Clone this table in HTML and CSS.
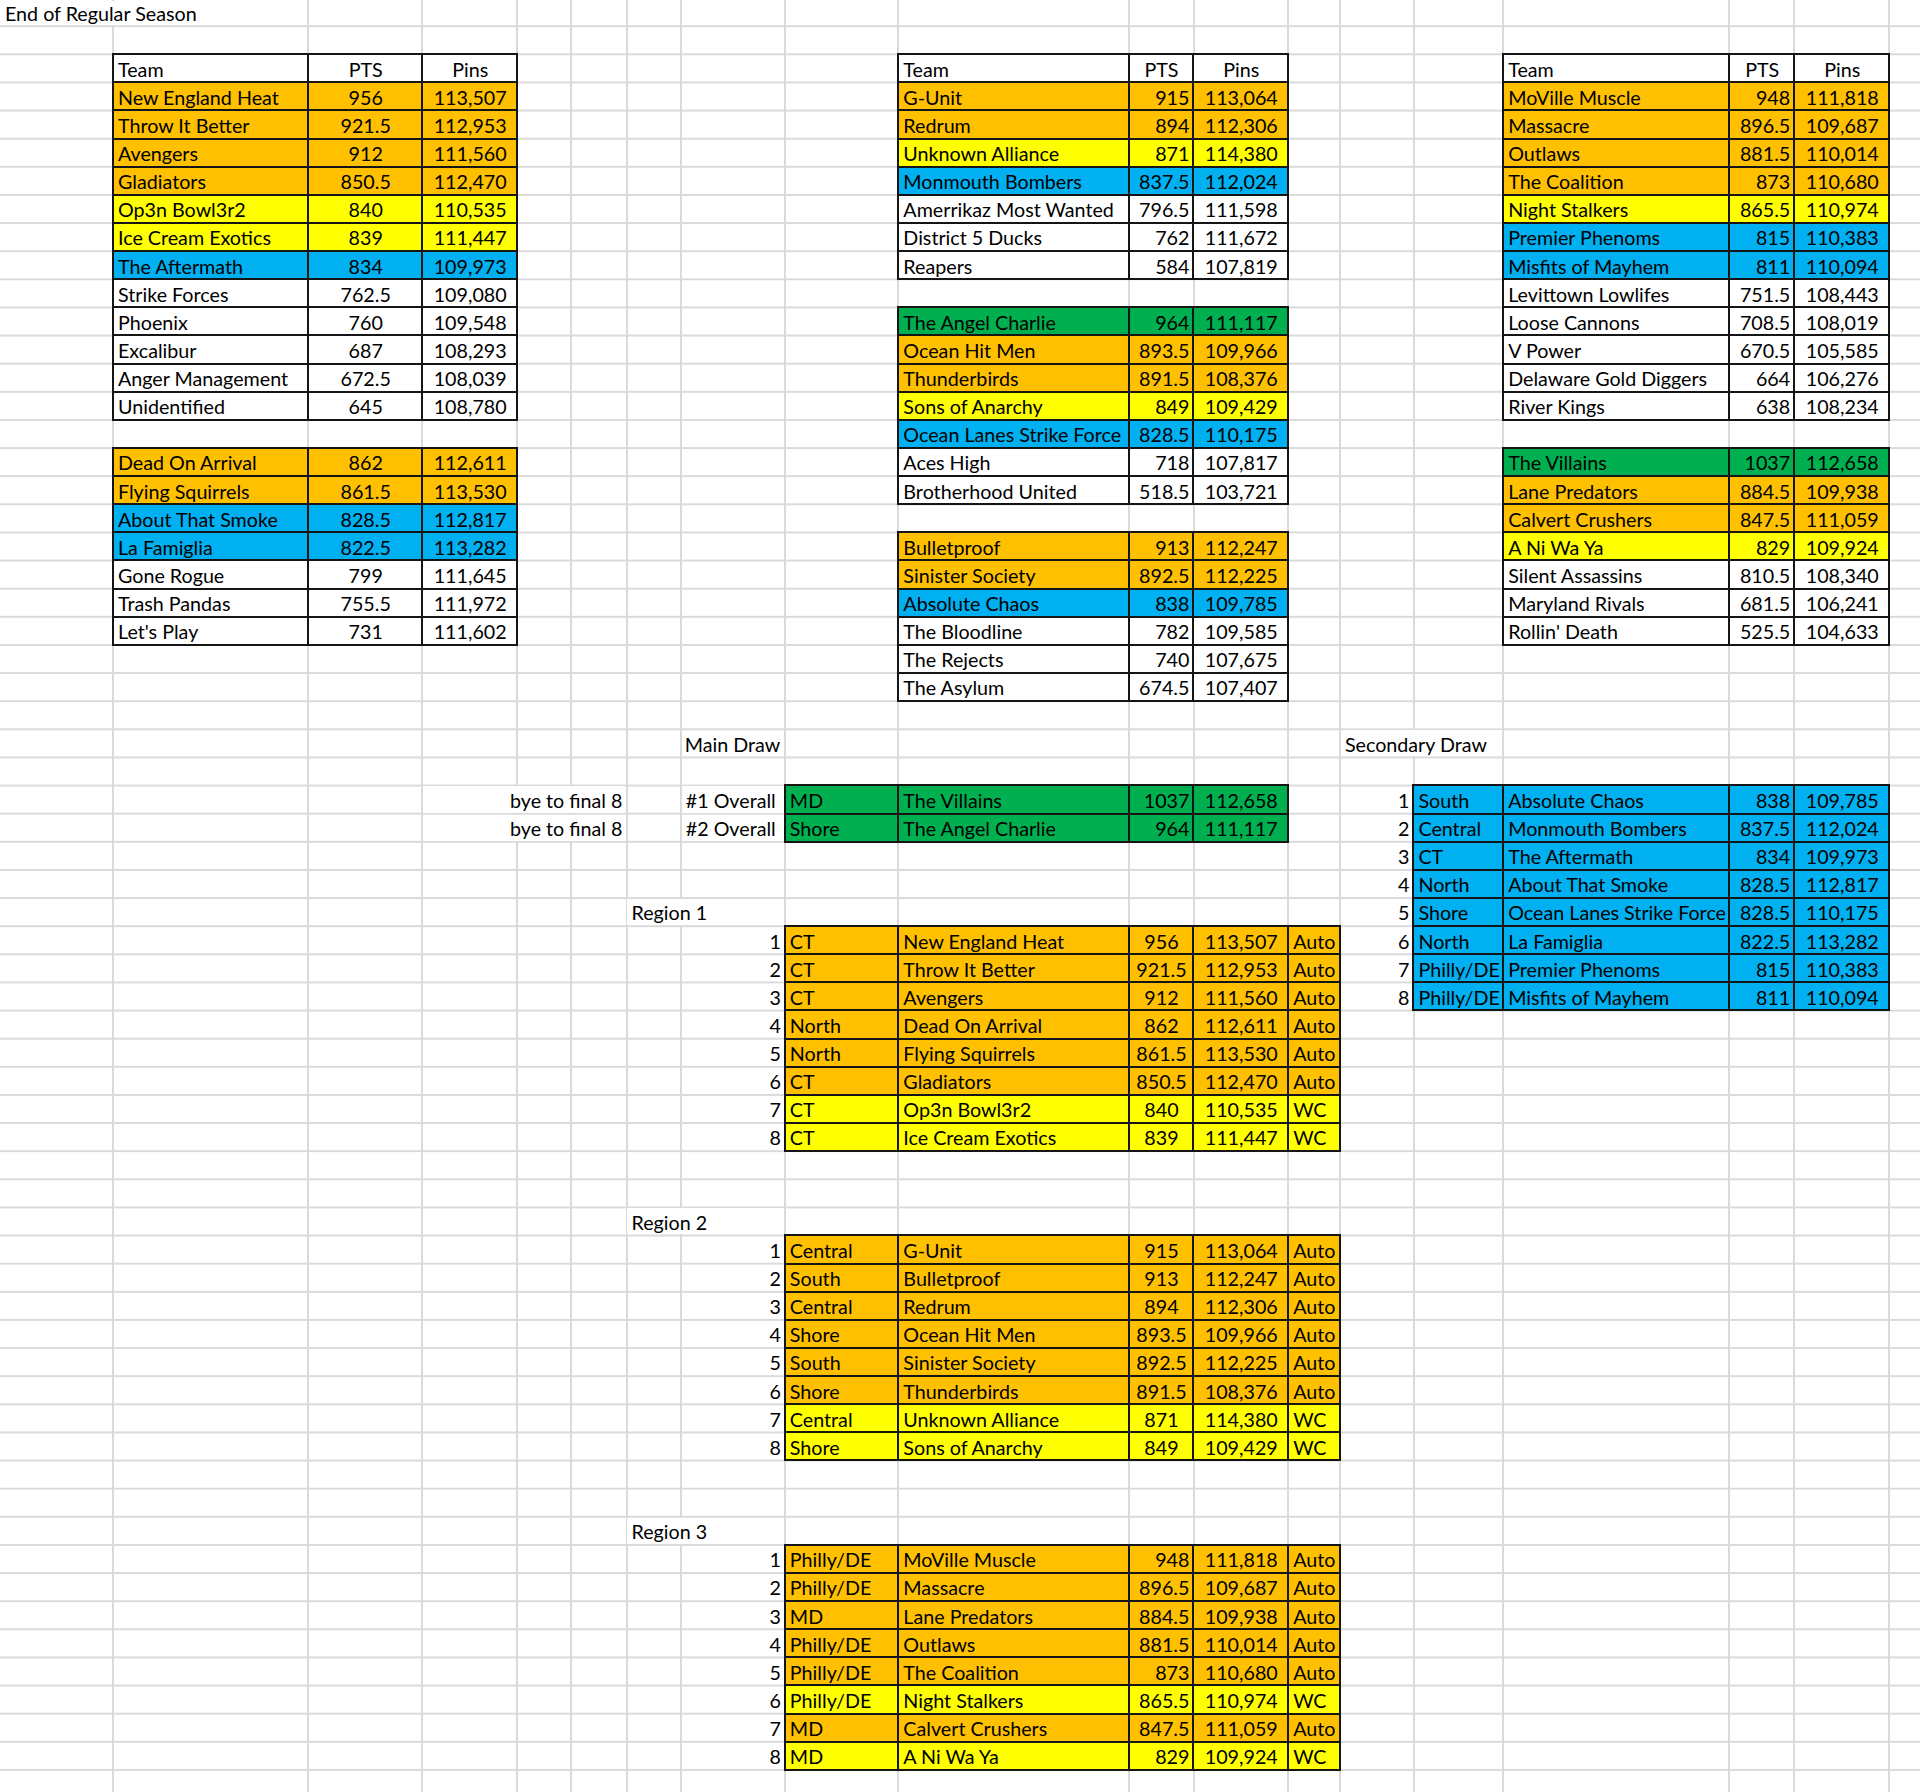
FILE: index.html
```html
<!DOCTYPE html>
<html lang="en">
<head>
<meta charset="utf-8">
<title>End of Regular Season</title>
<link rel="stylesheet" href="styles.css">
</head>
<body>
<div class="sheet">
  <div class="lbl over title">End of Regular Season</div>

  <!-- Left standings -->
  <div class="tbl t3 tl a-cc pos-l1">
    <div class="r h"><span>Team</span><span>PTS</span><span>Pins</span></div>
    <div class="r o"><span>New England Heat</span><span>956</span><span>113,507</span></div>
    <div class="r o"><span>Throw It Better</span><span>921.5</span><span>112,953</span></div>
    <div class="r o"><span>Avengers</span><span>912</span><span>111,560</span></div>
    <div class="r o"><span>Gladiators</span><span>850.5</span><span>112,470</span></div>
    <div class="r y"><span>Op3n Bowl3r2</span><span>840</span><span>110,535</span></div>
    <div class="r y"><span>Ice Cream Exotics</span><span>839</span><span>111,447</span></div>
    <div class="r b"><span>The Aftermath</span><span>834</span><span>109,973</span></div>
    <div class="r"><span>Strike Forces</span><span>762.5</span><span>109,080</span></div>
    <div class="r"><span>Phoenix</span><span>760</span><span>109,548</span></div>
    <div class="r"><span>Excalibur</span><span>687</span><span>108,293</span></div>
    <div class="r"><span>Anger Management</span><span>672.5</span><span>108,039</span></div>
    <div class="r"><span>Unidentified</span><span>645</span><span>108,780</span></div>
  </div>
  <div class="tbl t3 tl a-cc pos-l2">
    <div class="r o"><span>Dead On Arrival</span><span>862</span><span>112,611</span></div>
    <div class="r o"><span>Flying Squirrels</span><span>861.5</span><span>113,530</span></div>
    <div class="r b"><span>About That Smoke</span><span>828.5</span><span>112,817</span></div>
    <div class="r b"><span>La Famiglia</span><span>822.5</span><span>113,282</span></div>
    <div class="r"><span>Gone Rogue</span><span>799</span><span>111,645</span></div>
    <div class="r"><span>Trash Pandas</span><span>755.5</span><span>111,972</span></div>
    <div class="r"><span>Let's Play</span><span>731</span><span>111,602</span></div>
  </div>

  <!-- Middle standings -->
  <div class="tbl t3 tm a-rc pos-m1">
    <div class="r h"><span>Team</span><span>PTS</span><span>Pins</span></div>
    <div class="r o"><span>G-Unit</span><span>915</span><span>113,064</span></div>
    <div class="r o"><span>Redrum</span><span>894</span><span>112,306</span></div>
    <div class="r y"><span>Unknown Alliance</span><span>871</span><span>114,380</span></div>
    <div class="r b"><span>Monmouth Bombers</span><span>837.5</span><span>112,024</span></div>
    <div class="r"><span>Amerrikaz Most Wanted</span><span>796.5</span><span>111,598</span></div>
    <div class="r"><span>District 5 Ducks</span><span>762</span><span>111,672</span></div>
    <div class="r"><span>Reapers</span><span>584</span><span>107,819</span></div>
  </div>
  <div class="tbl t3 tm a-rc pos-m2">
    <div class="r g"><span>The Angel Charlie</span><span>964</span><span>111,117</span></div>
    <div class="r o"><span>Ocean Hit Men</span><span>893.5</span><span>109,966</span></div>
    <div class="r o"><span>Thunderbirds</span><span>891.5</span><span>108,376</span></div>
    <div class="r y"><span>Sons of Anarchy</span><span>849</span><span>109,429</span></div>
    <div class="r b"><span>Ocean Lanes Strike Force</span><span>828.5</span><span>110,175</span></div>
    <div class="r"><span>Aces High</span><span>718</span><span>107,817</span></div>
    <div class="r"><span>Brotherhood United</span><span>518.5</span><span>103,721</span></div>
  </div>
  <div class="tbl t3 tm a-rc pos-m3">
    <div class="r o"><span>Bulletproof</span><span>913</span><span>112,247</span></div>
    <div class="r o"><span>Sinister Society</span><span>892.5</span><span>112,225</span></div>
    <div class="r b"><span>Absolute Chaos</span><span>838</span><span>109,785</span></div>
    <div class="r"><span>The Bloodline</span><span>782</span><span>109,585</span></div>
    <div class="r"><span>The Rejects</span><span>740</span><span>107,675</span></div>
    <div class="r"><span>The Asylum</span><span>674.5</span><span>107,407</span></div>
  </div>

  <!-- Right standings -->
  <div class="tbl t3 tr a-rc pos-r1">
    <div class="r h"><span>Team</span><span>PTS</span><span>Pins</span></div>
    <div class="r o"><span>MoVille Muscle</span><span>948</span><span>111,818</span></div>
    <div class="r o"><span>Massacre</span><span>896.5</span><span>109,687</span></div>
    <div class="r o"><span>Outlaws</span><span>881.5</span><span>110,014</span></div>
    <div class="r o"><span>The Coalition</span><span>873</span><span>110,680</span></div>
    <div class="r y"><span>Night Stalkers</span><span>865.5</span><span>110,974</span></div>
    <div class="r b"><span>Premier Phenoms</span><span>815</span><span>110,383</span></div>
    <div class="r b"><span>Misfits of Mayhem</span><span>811</span><span>110,094</span></div>
    <div class="r"><span>Levittown Lowlifes</span><span>751.5</span><span>108,443</span></div>
    <div class="r"><span>Loose Cannons</span><span>708.5</span><span>108,019</span></div>
    <div class="r"><span>V Power</span><span>670.5</span><span>105,585</span></div>
    <div class="r"><span>Delaware Gold Diggers</span><span>664</span><span>106,276</span></div>
    <div class="r"><span>River Kings</span><span>638</span><span>108,234</span></div>
  </div>
  <div class="tbl t3 tr a-rc pos-r2">
    <div class="r g"><span>The Villains</span><span>1037</span><span>112,658</span></div>
    <div class="r o"><span>Lane Predators</span><span>884.5</span><span>109,938</span></div>
    <div class="r o"><span>Calvert Crushers</span><span>847.5</span><span>111,059</span></div>
    <div class="r y"><span>A Ni Wa Ya</span><span>829</span><span>109,924</span></div>
    <div class="r"><span>Silent Assassins</span><span>810.5</span><span>108,340</span></div>
    <div class="r"><span>Maryland Rivals</span><span>681.5</span><span>106,241</span></div>
    <div class="r"><span>Rollin' Death</span><span>525.5</span><span>104,633</span></div>
  </div>

  <!-- Main draw -->
  <div class="lbl pos-maindraw">Main Draw</div>
  <div class="stack right pos-bye">
    <div class="lbl">bye to final 8</div>
    <div class="lbl">bye to final 8</div>
  </div>
  <div class="stack pos-overall">
    <div class="lbl">#1 Overall</div>
    <div class="lbl">#2 Overall</div>
  </div>
  <div class="tbl t4 tmain a-rc pos-main">
    <div class="r g"><span>MD</span><span>The Villains</span><span>1037</span><span>112,658</span></div>
    <div class="r g"><span>Shore</span><span>The Angel Charlie</span><span>964</span><span>111,117</span></div>
  </div>

  <!-- Region 1 -->
  <div class="lbl over pos-reg1">Region 1</div>
  <div class="stack nums pos-n1">
    <div>1</div><div>2</div><div>3</div><div>4</div><div>5</div><div>6</div><div>7</div><div>8</div>
  </div>
  <div class="tbl t5 a-cc pos-rg1">
    <div class="r o"><span>CT</span><span>New England Heat</span><span>956</span><span>113,507</span><span>Auto</span></div>
    <div class="r o"><span>CT</span><span>Throw It Better</span><span>921.5</span><span>112,953</span><span>Auto</span></div>
    <div class="r o"><span>CT</span><span>Avengers</span><span>912</span><span>111,560</span><span>Auto</span></div>
    <div class="r o"><span>North</span><span>Dead On Arrival</span><span>862</span><span>112,611</span><span>Auto</span></div>
    <div class="r o"><span>North</span><span>Flying Squirrels</span><span>861.5</span><span>113,530</span><span>Auto</span></div>
    <div class="r o"><span>CT</span><span>Gladiators</span><span>850.5</span><span>112,470</span><span>Auto</span></div>
    <div class="r y"><span>CT</span><span>Op3n Bowl3r2</span><span>840</span><span>110,535</span><span>WC</span></div>
    <div class="r y"><span>CT</span><span>Ice Cream Exotics</span><span>839</span><span>111,447</span><span>WC</span></div>
  </div>

  <!-- Region 2 -->
  <div class="lbl over pos-reg2">Region 2</div>
  <div class="stack nums pos-n2">
    <div>1</div><div>2</div><div>3</div><div>4</div><div>5</div><div>6</div><div>7</div><div>8</div>
  </div>
  <div class="tbl t5 a-cc pos-rg2">
    <div class="r o"><span>Central</span><span>G-Unit</span><span>915</span><span>113,064</span><span>Auto</span></div>
    <div class="r o"><span>South</span><span>Bulletproof</span><span>913</span><span>112,247</span><span>Auto</span></div>
    <div class="r o"><span>Central</span><span>Redrum</span><span>894</span><span>112,306</span><span>Auto</span></div>
    <div class="r o"><span>Shore</span><span>Ocean Hit Men</span><span>893.5</span><span>109,966</span><span>Auto</span></div>
    <div class="r o"><span>South</span><span>Sinister Society</span><span>892.5</span><span>112,225</span><span>Auto</span></div>
    <div class="r o"><span>Shore</span><span>Thunderbirds</span><span>891.5</span><span>108,376</span><span>Auto</span></div>
    <div class="r y"><span>Central</span><span>Unknown Alliance</span><span>871</span><span>114,380</span><span>WC</span></div>
    <div class="r y"><span>Shore</span><span>Sons of Anarchy</span><span>849</span><span>109,429</span><span>WC</span></div>
  </div>

  <!-- Region 3 -->
  <div class="lbl over pos-reg3">Region 3</div>
  <div class="stack nums pos-n3">
    <div>1</div><div>2</div><div>3</div><div>4</div><div>5</div><div>6</div><div>7</div><div>8</div>
  </div>
  <div class="tbl t5 a-rc pos-rg3">
    <div class="r o"><span>Philly/DE</span><span>MoVille Muscle</span><span>948</span><span>111,818</span><span>Auto</span></div>
    <div class="r o"><span>Philly/DE</span><span>Massacre</span><span>896.5</span><span>109,687</span><span>Auto</span></div>
    <div class="r o"><span>MD</span><span>Lane Predators</span><span>884.5</span><span>109,938</span><span>Auto</span></div>
    <div class="r o"><span>Philly/DE</span><span>Outlaws</span><span>881.5</span><span>110,014</span><span>Auto</span></div>
    <div class="r o"><span>Philly/DE</span><span>The Coalition</span><span>873</span><span>110,680</span><span>Auto</span></div>
    <div class="r y"><span>Philly/DE</span><span>Night Stalkers</span><span>865.5</span><span>110,974</span><span>WC</span></div>
    <div class="r o"><span>MD</span><span>Calvert Crushers</span><span>847.5</span><span>111,059</span><span>Auto</span></div>
    <div class="r y"><span>MD</span><span>A Ni Wa Ya</span><span>829</span><span>109,924</span><span>WC</span></div>
  </div>

  <!-- Secondary draw -->
  <div class="lbl over pos-secdraw">Secondary Draw</div>
  <div class="stack nums pos-ns">
    <div>1</div><div>2</div><div>3</div><div>4</div><div>5</div><div>6</div><div>7</div><div>8</div>
  </div>
  <div class="tbl t4 tsec a-rc pos-sec">
    <div class="r b"><span>South</span><span>Absolute Chaos</span><span>838</span><span>109,785</span></div>
    <div class="r b"><span>Central</span><span>Monmouth Bombers</span><span>837.5</span><span>112,024</span></div>
    <div class="r b"><span>CT</span><span>The Aftermath</span><span>834</span><span>109,973</span></div>
    <div class="r b"><span>North</span><span>About That Smoke</span><span>828.5</span><span>112,817</span></div>
    <div class="r b"><span>Shore</span><span>Ocean Lanes Strike Force</span><span>828.5</span><span>110,175</span></div>
    <div class="r b"><span>North</span><span>La Famiglia</span><span>822.5</span><span>113,282</span></div>
    <div class="r b"><span>Philly/DE</span><span>Premier Phenoms</span><span>815</span><span>110,383</span></div>
    <div class="r b"><span>Philly/DE</span><span>Misfits of Mayhem</span><span>811</span><span>110,094</span></div>
  </div>
</div>
</body>
</html>
```

FILE: styles.css
```css
:root {
  --A: 113px; --B: 195px; --C: 114.4px; --D: 94.6px; --E: 54.4px; --F: 55.1px;
  --G: 54.3px; --H: 104.1px; --I: 113.5px; --J: 230.2px; --K: 64.9px; --L: 94.7px;
  --M: 51.8px; --N: 73.5px; --O: 89.8px; --P: 226.1px; --Q: 64.9px; --R: 95.1px; --S: 30.6px;
  --rh: 28.13px;
  --grid: #dadada;
  --orange: #ffc000;
  --yellow: #ffff00;
  --blue: #00b0f0;
  --green: #00b050;
}

* { box-sizing: border-box; }

html, body {
  margin: 0;
  padding: 0;
  background: #fff;
}

body {
  font-family: Lato, "Open Sans", "Liberation Sans", sans-serif;
  font-size: 19.7px;
  color: #000;
  width: 1920px;
  height: 1792px;
  overflow: hidden;
}

.sheet {
  width: 1920px;
  height: 1792px;
  display: grid;
  grid-template-columns: var(--A) var(--B) var(--C) var(--D) var(--E) var(--F) var(--G) var(--H) var(--I) var(--J) var(--K) var(--L) var(--M) var(--N) var(--O) var(--P) var(--Q) var(--R) var(--S);
  grid-template-rows: 26px repeat(62, var(--rh)) 1fr;
  background-color: #fff;
  background-image:
    repeating-linear-gradient(to bottom, transparent 0 25px, var(--grid) 25px 27px, transparent 27px 28.13px),
    linear-gradient(var(--grid), var(--grid)),
    linear-gradient(var(--grid), var(--grid)),
    linear-gradient(var(--grid), var(--grid)),
    linear-gradient(var(--grid), var(--grid)),
    linear-gradient(var(--grid), var(--grid)),
    linear-gradient(var(--grid), var(--grid)),
    linear-gradient(var(--grid), var(--grid)),
    linear-gradient(var(--grid), var(--grid)),
    linear-gradient(var(--grid), var(--grid)),
    linear-gradient(var(--grid), var(--grid)),
    linear-gradient(var(--grid), var(--grid)),
    linear-gradient(var(--grid), var(--grid)),
    linear-gradient(var(--grid), var(--grid)),
    linear-gradient(var(--grid), var(--grid)),
    linear-gradient(var(--grid), var(--grid)),
    linear-gradient(var(--grid), var(--grid)),
    linear-gradient(var(--grid), var(--grid)),
    linear-gradient(var(--grid), var(--grid));
  background-repeat: repeat-y, no-repeat, no-repeat, no-repeat, no-repeat, no-repeat, no-repeat, no-repeat, no-repeat, no-repeat, no-repeat, no-repeat, no-repeat, no-repeat, no-repeat, no-repeat, no-repeat, no-repeat, no-repeat;
  background-size: 100% 28.13px, 2px 100%, 2px 100%, 2px 100%, 2px 100%, 2px 100%, 2px 100%, 2px 100%, 2px 100%, 2px 100%, 2px 100%, 2px 100%, 2px 100%, 2px 100%, 2px 100%, 2px 100%, 2px 100%, 2px 100%, 2px 100%;
  background-position:
    0 0,
    112px 0, 307px 0, 421.4px 0, 516px 0, 570.4px 0, 625.5px 0, 679.8px 0,
    783.9px 0, 897.4px 0, 1127.6px 0, 1192.5px 0, 1287.2px 0, 1339px 0,
    1412.5px 0, 1502.3px 0, 1728.4px 0, 1793.3px 0, 1888.4px 0;
}

/* plain text cells */
.lbl {
  display: flex;
  align-items: center;
  padding: 2px 4px 0 4px;
  white-space: nowrap;
}
.over {
  background: #fff;
  margin: 1px;
}
.title { grid-column: 1 / 3; grid-row: 1; padding-top: 0; }

.stack {
  display: grid;
  grid-auto-rows: var(--rh);
}
.stack > div {
  display: flex;
  align-items: center;
  padding: 2px 4px 0 4px;
  white-space: nowrap;
  background: #fff;
  margin: 1px;
}
.stack.right > div,
.stack.nums > div {
  justify-content: flex-end;
  padding-right: 3px;
}
.stack.nums > div { background: transparent; }

/* tables */
.tbl {
  display: grid;
  gap: 2px;
  padding: 2px;
  margin: -1px;
  background: #151515;
  grid-auto-rows: calc(var(--rh) - 2px);
  align-content: start;
}
.r { display: contents; }
.r > span {
  background: #fff;
  display: flex;
  align-items: center;
  padding: 2px 3px 0 4px;
  white-space: nowrap;
  overflow: hidden;
}
.r.o > span { background: var(--orange); }
.r.y > span { background: var(--yellow); }
.r.b > span { background: var(--blue); }
.r.g > span { background: var(--green); }

.tl { grid-template-columns: calc(var(--B) - 2px) calc(var(--C) - 2px) calc(var(--D) - 2px); }
.tm { grid-template-columns: calc(var(--J) - 2px) calc(var(--K) - 2px) calc(var(--L) - 2px); }
.tr { grid-template-columns: calc(var(--P) - 2px) calc(var(--Q) - 2px) calc(var(--R) - 2px); }
.tmain { grid-template-columns: calc(var(--I) - 2px) calc(var(--J) - 2px) calc(var(--K) - 2px) calc(var(--L) - 2px); }
.t5 { grid-template-columns: calc(var(--I) - 2px) calc(var(--J) - 2px) calc(var(--K) - 2px) calc(var(--L) - 2px) calc(var(--M) - 2px); }
.tsec { grid-template-columns: calc(var(--O) - 2px) calc(var(--P) - 2px) calc(var(--Q) - 2px) calc(var(--R) - 2px); }

/* alignment: three-column standings */
.t3.a-cc .r > span:nth-child(2),
.t3.a-cc .r > span:nth-child(3) { justify-content: center; }
.t3.a-rc .r > span:nth-child(2) { justify-content: flex-end; }
.t3.a-rc .r > span:nth-child(3) { justify-content: center; }
.t3 .r.h > span:nth-child(2),
.t3 .r.h > span:nth-child(3) { justify-content: center; }

/* alignment: draw tables (region, team, pts, pins, status) */
.t4.a-rc .r > span:nth-child(3),
.t5.a-rc .r > span:nth-child(3) { justify-content: flex-end; }
.t5.a-cc .r > span:nth-child(3) { justify-content: center; }
.t4 .r > span:nth-child(4),
.t5 .r > span:nth-child(4) { justify-content: center; }

/* placement on the sheet */
.pos-l1 { grid-column: 2 / 5; grid-row: 3 / 16; }
.pos-l2 { grid-column: 2 / 5; grid-row: 17 / 24; }
.pos-m1 { grid-column: 10 / 13; grid-row: 3 / 11; }
.pos-m2 { grid-column: 10 / 13; grid-row: 12 / 19; }
.pos-m3 { grid-column: 10 / 13; grid-row: 20 / 26; }
.pos-r1 { grid-column: 16 / 19; grid-row: 3 / 16; }
.pos-r2 { grid-column: 16 / 19; grid-row: 17 / 24; }

.pos-maindraw { grid-column: 8; grid-row: 27; }
.pos-bye { grid-column: 4 / 7; grid-row: 29 / 31; }
.pos-overall { grid-column: 8; grid-row: 29 / 31; }
.pos-main { grid-column: 9 / 13; grid-row: 29 / 31; }

.pos-reg1 { grid-column: 7 / 9; grid-row: 33; }
.pos-n1 { grid-column: 8; grid-row: 34 / 42; }
.pos-rg1 { grid-column: 9 / 14; grid-row: 34 / 42; }

.pos-reg2 { grid-column: 7 / 9; grid-row: 44; }
.pos-n2 { grid-column: 8; grid-row: 45 / 53; }
.pos-rg2 { grid-column: 9 / 14; grid-row: 45 / 53; }

.pos-reg3 { grid-column: 7 / 9; grid-row: 55; }
.pos-n3 { grid-column: 8; grid-row: 56 / 64; }
.pos-rg3 { grid-column: 9 / 14; grid-row: 56 / 64; }

.pos-secdraw { grid-column: 14 / 16; grid-row: 27; }
.pos-ns { grid-column: 14; grid-row: 29 / 37; }
.pos-sec { grid-column: 15 / 19; grid-row: 29 / 37; }
```
